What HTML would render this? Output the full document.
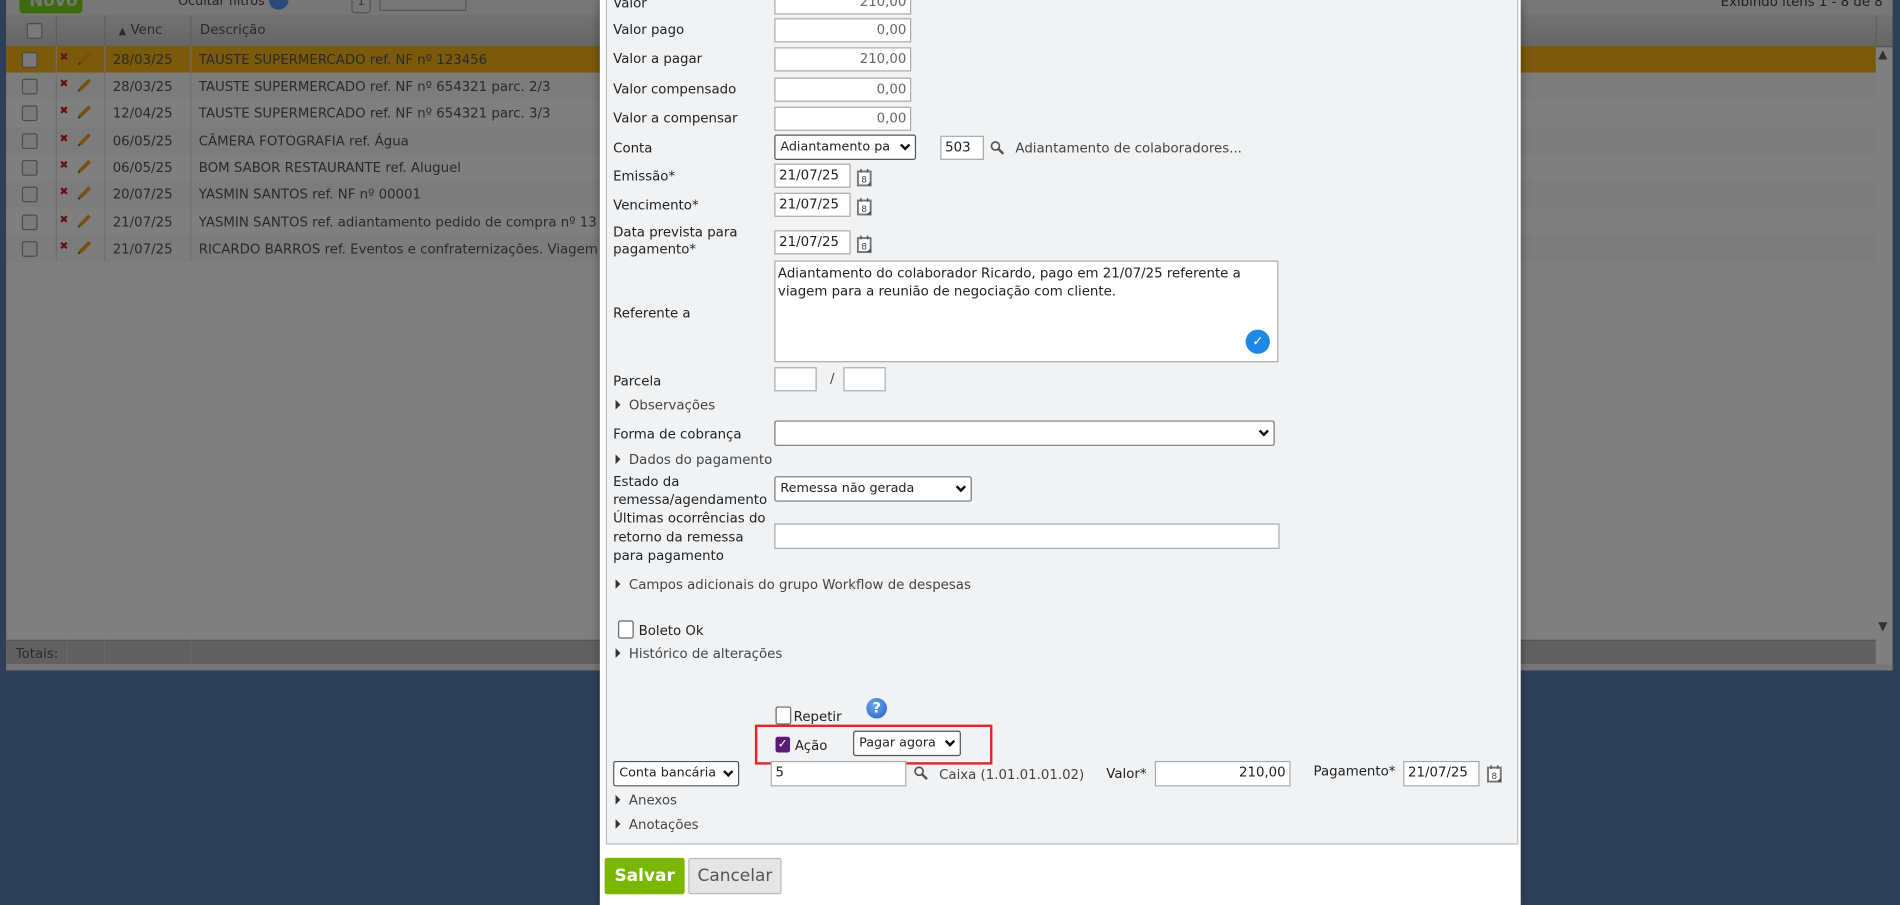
<!DOCTYPE html>
<html><head><meta charset="utf-8">
<style>
html,body{margin:0;padding:0;width:1900px;height:905px;overflow:hidden;background:#2e4059;}
#w{position:absolute;left:0;top:0;width:1568px;height:747px;transform:scale(1.21173);transform-origin:0 0;font-family:"DejaVu Sans","Liberation Sans",sans-serif;font-size:11px;color:#222;}
.a{position:absolute;white-space:nowrap;}
.row{position:absolute;left:5px;width:1543px;height:22px;}
.cb{position:absolute;width:11px;height:11px;border:1px solid #999;border-radius:2px;background:#f4f4f4;}
.inp{position:absolute;background:#fff;border:1px solid #aaa;height:20px;box-sizing:border-box;font-size:11px;line-height:18px;padding:0 3px;}
.r{text-align:right;color:#666;}
.sel{position:absolute;background:#fff;border:1px solid #555;border-radius:2px;height:21px;box-sizing:border-box;font-size:10.5px;line-height:19px;padding:0 16px 0 4px;overflow:hidden;}
.sel:after{content:"";position:absolute;right:5px;top:5px;width:4px;height:4px;border-right:2px solid #111;border-bottom:2px solid #111;transform:rotate(45deg);}
.lb{position:absolute;left:506px;font-size:11px;color:#222;}
.tri{position:absolute;left:508px;width:0;height:0;border-left:4px solid #333;border-top:4px solid transparent;border-bottom:4px solid transparent;}
.lk{position:absolute;left:519px;color:#444;}
.t{color:#555;}
</style></head><body><div id="w">
<div class="a" style="left:5px;top:0;width:1557px;height:553px;background:#fefefe"></div>
<div class="a" style="left:5px;top:0;width:1557px;height:13px;background:#eee;border-bottom:1px solid #b4b4b4"></div>
<div class="a" style="left:16px;top:-6px;width:52px;height:17px;background:#7ad619;border-radius:3px;color:#eee;font-weight:bold;font-size:14px;line-height:14px;padding-left:8px;box-sizing:border-box">Novo</div>
<div class="a t" style="left:147px;top:-5px;font-size:10.5px;color:#444">Ocultar filtros</div>
<div class="a" style="left:222px;top:-4px;width:16px;height:12px;background:#5494f4;border-radius:0 0 8px 8px"></div>
<div class="a" style="left:290px;top:-4px;width:14px;height:13px;border:1px solid #aaa;border-radius:3px;font-size:9px;text-align:center;color:#666;line-height:10px">1</div>
<div class="a" style="left:313px;top:-4px;width:70px;height:11px;border:1px solid #aaa"></div>
<div class="a" style="left:1420px;top:-5px;color:#444">Exibindo itens 1 - 8 de 8</div>
<div class="a" style="left:5px;top:13px;width:1557px;height:25px;background:linear-gradient(#e4e4e4,#cdcdcd);border-bottom:1px solid #aaa"></div>
<div class="cb" style="left:22px;top:19px"></div>
<div class="a" style="left:46px;top:13px;width:1px;height:25px;background:#bcbcbc"></div>
<div class="a" style="left:86px;top:13px;width:1px;height:25px;background:#bcbcbc"></div>
<div class="a" style="left:157px;top:13px;width:1px;height:25px;background:#bcbcbc"></div>
<div class="a t" style="left:98px;top:18px"><span style="font-size:8px">▲</span> Venc</div>
<div class="a t" style="left:165px;top:18px">Descrição</div>
<div class="a" style="left:1548px;top:13px;width:1px;height:25px;background:#bcbcbc"></div>
<div class="a" style="left:1550px;top:40px;font-size:10px;color:#666">▲</div>
<div class="a" style="left:1550px;top:512px;font-size:10px;color:#666">▼</div>

<div class="row" style="top:38px;background:#f6b418"></div>
<div class="row" style="top:60px;background:#f8f8f8"></div>
<div class="row" style="top:82px;background:#ffffff"></div>
<div class="row" style="top:105px;background:#f8f8f8"></div>
<div class="row" style="top:127px;background:#ffffff"></div>
<div class="row" style="top:149px;background:#f8f8f8"></div>
<div class="row" style="top:172px;background:#ffffff"></div>
<div class="row" style="top:194px;background:#f8f8f8"></div>
<div class="a" style="left:46px;top:38px;width:1px;height:178px;background:#dcdcdc"></div>
<div class="a" style="left:86px;top:38px;width:1px;height:178px;background:#dcdcdc"></div>
<div class="a" style="left:157px;top:38px;width:1px;height:178px;background:#dcdcdc"></div>

<div id="rows"></div>
<script>
var d=[["28/03/25","TAUSTE SUPERMERCADO ref. NF nº 123456"],["28/03/25","TAUSTE SUPERMERCADO ref. NF nº 654321 parc. 2/3"],["12/04/25","TAUSTE SUPERMERCADO ref. NF nº 654321 parc. 3/3"],["06/05/25","CÂMERA FOTOGRAFIA ref. Água"],["06/05/25","BOM SABOR RESTAURANTE ref. Aluguel"],["20/07/25","YASMIN SANTOS ref. NF nº 00001"],["21/07/25","YASMIN SANTOS ref. adiantamento pedido de compra nº 13"],["21/07/25","RICARDO BARROS ref. Eventos e confraternizações. Viagem"]];
var h="",ys=[38,60,82,105,127,149,172,194];
for(var i=0;i<8;i++){var y=ys[i];
h+='<div class="cb" style="left:18px;top:'+(y+5)+'px"></div>';
h+='<div class="a" style="left:49px;top:'+(y+5)+'px;color:#d42020;font-size:9px;font-weight:bold">✖</div>';
h+='<svg class="a" style="left:63px;top:'+(y+3)+'px" width="14" height="14" viewBox="0 0 14 14"><path d="M3 11 L11 3" stroke="#f0a020" stroke-width="3"/><path d="M3 11 L1.5 12.5" stroke="#666" stroke-width="1.5"/></svg>';
h+='<div class="a" style="left:93px;top:'+(y+5)+'px;color:#555">'+d[i][0]+'</div>';
h+='<div class="a" style="left:164px;top:'+(y+5)+'px;color:#555">'+d[i][1]+'</div>';}
document.getElementById("rows").innerHTML=h;
</script>
<div class="a" style="left:5px;top:528px;width:1543px;height:20px;background:#c2c2c2;border-top:1px solid #aaa"></div>
<div class="a t" style="left:13px;top:533px">Totais:</div>
<div class="a" style="left:55px;top:528px;width:1px;height:20px;background:#d4d4d4"></div>
<div class="a" style="left:86px;top:528px;width:1px;height:20px;background:#d4d4d4"></div>
<div class="a" style="left:157px;top:528px;width:1px;height:20px;background:#d4d4d4"></div>
<div class="a" style="left:5px;top:548px;width:1557px;height:5px;background:#eee"></div>
<!-- overlay -->
<div class="a" style="left:0;top:0;width:1568px;height:553px;background:rgba(0,0,0,0.5)"></div>
<div class="a" style="left:0;top:0;width:5px;height:747px;background:#2e4059"></div>
<div class="a" style="left:1562px;top:0;width:6px;height:553px;background:#2e4059"></div>

<div class="a" style="left:495px;top:0;width:760px;height:747px;background:#fff;box-shadow:0 0 8px rgba(0,0,0,.4)"></div>
<div class="a" style="left:500px;top:-2px;width:751px;height:697px;background:#f1f2f3;border:1px solid #bbb"></div>

<div class="lb" style="top:-4px">Valor</div><div class="inp r" style="left:639px;top:-8px;width:113px">210,00</div>
<div class="lb" style="top:18px">Valor pago</div><div class="inp r" style="left:639px;top:15px;width:113px">0,00</div>
<div class="lb" style="top:42px">Valor a pagar</div><div class="inp r" style="left:639px;top:39px;width:113px">210,00</div>
<div class="lb" style="top:67px">Valor compensado</div><div class="inp r" style="left:639px;top:64px;width:113px">0,00</div>
<div class="lb" style="top:91px">Valor a compensar</div><div class="inp r" style="left:639px;top:88px;width:113px">0,00</div>
<div class="lb" style="top:116px">Conta</div><div class="sel" style="left:639px;top:111px;width:117px">Adiantamento pa</div>
<div class="inp" style="left:776px;top:112px;width:36px">503</div>
<svg class="a" style="left:817px;top:116px" width="12" height="12" viewBox="0 0 12 12"><circle cx="4.5" cy="4.5" r="3.3" fill="none" stroke="#555" stroke-width="1.4"/><path d="M7 7 L11 11" stroke="#555" stroke-width="2"/></svg>
<div class="a" style="left:838px;top:116px;color:#444">Adiantamento de colaboradores...</div>

<div class="lb" style="top:139px">Emissão*</div><div class="inp" style="left:639px;top:135px;width:63px">21/07/25</div>
<div class="lb" style="top:163px">Vencimento*</div><div class="inp" style="left:639px;top:159px;width:63px">21/07/25</div>
<div class="lb" style="top:185px;line-height:14px">Data prevista para<br>pagamento*</div><div class="inp" style="left:639px;top:190px;width:63px">21/07/25</div>

<div id="cals"></div>
<script>
var c="",pos=[[707,139],[707,163],[707,194],[1227,631]];
for(var k=0;k<pos.length;k++){c+='<svg class="a" style="left:'+pos[k][0]+'px;top:'+pos[k][1]+'px" width="13" height="15" viewBox="0 0 13 15"><rect x="1" y="2.5" width="10.5" height="11.5" fill="#fff" stroke="#777" stroke-width="1.6"/><path d="M3.5 0.5v3M9 0.5v3" stroke="#555" stroke-width="1.2"/><path d="M8.5 14 L11.5 11 V14 Z" fill="#444"/><text x="6.2" y="11.8" font-size="7.5" text-anchor="middle" fill="#444" font-family="DejaVu Sans">8</text></svg>';}
document.getElementById("cals").innerHTML=c;
</script>

<div class="lb" style="top:252px">Referente a</div>
<div class="a" style="left:639px;top:215px;width:416px;height:84px;background:#fff;border:1px solid #aaa;box-sizing:border-box;padding:2px 2px;line-height:15px;white-space:normal">Adiantamento do colaborador Ricardo, pago em 21/07/25 referente a viagem para a reunião de negociação com cliente.</div>
<div class="a" style="left:1028px;top:272px;width:20px;height:20px;border-radius:50%;background:#1e88e5;color:#fff;font-size:11px;text-align:center;line-height:20px">✓</div>

<div class="lb" style="top:308px">Parcela</div>
<div class="inp" style="left:639px;top:303px;width:35px"></div><div class="a" style="left:685px;top:306px;color:#444">/</div><div class="inp" style="left:696px;top:303px;width:35px"></div>
<div class="tri" style="top:330px"></div><div class="lk" style="top:328px">Observações</div>
<div class="lb" style="top:352px">Forma de cobrança</div><div class="sel" style="left:639px;top:347px;width:413px;border-color:#777"></div>
<div class="tri" style="top:375px"></div><div class="lk" style="top:373px">Dados do pagamento</div>
<div class="lb" style="top:390px;line-height:15px">Estado da<br>remessa/agendamento</div><div class="sel" style="left:639px;top:393px;width:163px;border-color:#777">Remessa não gerada</div>
<div class="lb" style="top:420px;line-height:15.5px">Últimas ocorrências do<br>retorno da remessa<br>para pagamento</div>
<div class="inp" style="left:639px;top:432px;width:417px;height:21px"></div>
<div class="tri" style="top:478px"></div><div class="lk" style="top:476px">Campos adicionais do grupo Workflow de despesas</div>
<div class="a" style="left:510px;top:512px;width:11px;height:13px;border:1px solid #666;border-radius:2px;background:#fff"></div>
<div class="a" style="left:527px;top:514px;color:#222">Boleto Ok</div>
<div class="tri" style="top:535px"></div><div class="lk" style="top:533px">Histórico de alterações</div>

<div class="a" style="left:640px;top:583px;width:11px;height:13px;border:1px solid #666;border-radius:2px;background:#fff"></div>
<div class="a" style="left:655px;top:585px">Repetir</div>
<div class="a" style="left:715px;top:576px;width:17px;height:17px;border-radius:50%;background:radial-gradient(circle at 40% 35%,#6fa8f0,#1f5fc0);color:#fff;font-weight:bold;text-align:center;line-height:17px;font-size:12px">?</div>
<div class="a" style="left:623px;top:598px;width:192px;height:29px;border:2px solid #e3262a"></div>
<div class="a" style="left:640px;top:608px;width:12px;height:13px;border-radius:2px;background:#5b1a7a;color:#fff;font-size:10px;line-height:13px;text-align:center">✓</div>
<div class="a" style="left:656px;top:609px">Ação</div>
<div class="sel" style="left:704px;top:603px;width:89px;border-color:#555">Pagar agora</div>

<div class="sel" style="left:506px;top:628px;width:104px;border-color:#555">Conta bancária</div>
<div class="inp" style="left:636px;top:628px;width:112px;height:21px">5</div>
<svg class="a" style="left:754px;top:632px" width="12" height="12" viewBox="0 0 12 12"><circle cx="4.5" cy="4.5" r="3.3" fill="none" stroke="#555" stroke-width="1.4"/><path d="M7 7 L11 11" stroke="#555" stroke-width="2"/></svg>
<div class="a" style="left:775px;top:633px;color:#444">Caixa (1.01.01.01.02)</div>
<div class="a" style="left:913px;top:632px">Valor*</div>
<div class="inp" style="left:953px;top:628px;width:112px;height:21px;text-align:right">210,00</div>
<div class="a" style="left:1084px;top:630px">Pagamento*</div>
<div class="inp" style="left:1158px;top:628px;width:63px;height:21px">21/07/25</div>
<div class="tri" style="top:656px"></div><div class="lk" style="top:654px">Anexos</div>
<div class="tri" style="top:676px"></div><div class="lk" style="top:674px">Anotações</div>

<div class="a" style="left:499px;top:708px;width:66px;height:30px;background:#7ab800;border-radius:2px;color:#fff;font-weight:bold;font-size:14px;line-height:30px;text-align:center">Salvar</div>
<div class="a" style="left:568px;top:708px;width:77px;height:30px;background:#e4e5e6;border:1px solid #bbb;border-radius:2px;box-sizing:border-box;color:#555;font-size:14px;line-height:28px;text-align:center">Cancelar</div>
</div></body></html>
